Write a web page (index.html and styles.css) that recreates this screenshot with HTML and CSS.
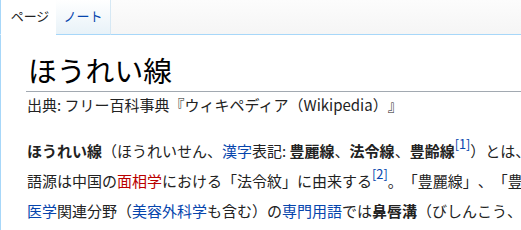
FILE: index.html
```html
<!DOCTYPE html>
<html lang="ja">
<head>
    <meta charset="UTF-8">
    <title>ほうれい線 - Wikipedia</title>
    <link rel="stylesheet" href="styles.css">
</head>
<body>
    <div class="tabs">
        <a class="tab selected" href="#">ページ</a>
        <a class="tab" href="#">ノート</a>
        <div class="tabs-rest"></div>
    </div>

    <div class="content">
        <h1 class="page-title">ほうれい線</h1>
        <div class="site-sub">出典: フリー百科事典『ウィキペディア（Wikipedia）』</div>

        <p class="body-text">
            <b>ほうれい線</b>（ほうれいせん、<a href="#">漢字</a>表記: <b>豊麗線</b>、<b>法令線</b>、<b>豊齢線</b><sup><a href="#">[1]</a></sup>）とは、ヒトの頬の<br>
            語源は中国の<a class="new" href="#">面相学</a>における「法令紋」に由来する<sup><a href="#">[2]</a></sup>。「豊麗線」、「豊齢線」<br>
            <a href="#">医学</a>関連分野（<a href="#">美容外科学</a>も含む）の<a href="#">専門用語</a>では<b>鼻唇溝</b>（びしんこう、
        </p>
    </div>
</body>
</html>
```

FILE: styles.css
```css
* {
    margin: 0;
    padding: 0;
    box-sizing: border-box;
}

html, body {
    overflow: hidden;
}

body {
    background: #f6f6f6;
    font-family: "Noto Sans CJK JP", "Liberation Sans", sans-serif;
    color: #222;
    text-spacing-trim: space-all;
}

a {
    color: #0645ad;
    text-decoration: none;
}

a.new {
    color: #ba0000;
}

/* tab strip */
.tabs {
    display: flex;
    height: 35px;
    background: linear-gradient(to bottom, #fcfcfc 0%, #f5f5f5 100%);
}

.tab {
    display: flex;
    align-items: center;
    justify-content: center;
    flex: 0 0 55px;
    height: 35px;
    padding-bottom: 3px;
    font-size: 13px;
    white-space: nowrap;
    border-bottom: 1px solid #a7d7f9;
    background: linear-gradient(to bottom, #fff 0%, #e8f2f8 100%);
    border-right: 1px solid #d6e8f4;
}

.tab.selected {
    flex: 0 0 56px;
    color: #222;
    background: #fff;
    border-bottom: 1px solid #fff;
    border-left: 1px solid #a7d7f9;
    border-right: none;
    padding-left: 3px;
}

.tabs-rest {
    flex: 1;
    border-bottom: 1px solid #a7d7f9;
}

/* article body */
.content {
    background: #fff;
    border-left: 1px solid #a7d7f9;
    padding: 16px 0 40px 25px;
    min-height: 200px;
    width: 900px;
}

.page-title {
    font-size: 28.8px;
    font-weight: normal;
    line-height: 1.3;
    color: #000;
    padding-left: 2px;
    padding-bottom: 3px;
    border-bottom: 1px solid #a2a9b1;
    margin-bottom: 2px;
}

.site-sub {
    font-size: 15px;
    line-height: 22px;
    padding-left: 1px;
    margin-bottom: 20px;
}

.body-text {
    font-size: 15px;
    line-height: 30px;
    white-space: nowrap;
    padding-left: 1px;
}

.body-text b {
    font-weight: bold;
}

.body-text sup {
    font-size: 0.85em;
    line-height: 1;
    vertical-align: 0.6em;
}
```
